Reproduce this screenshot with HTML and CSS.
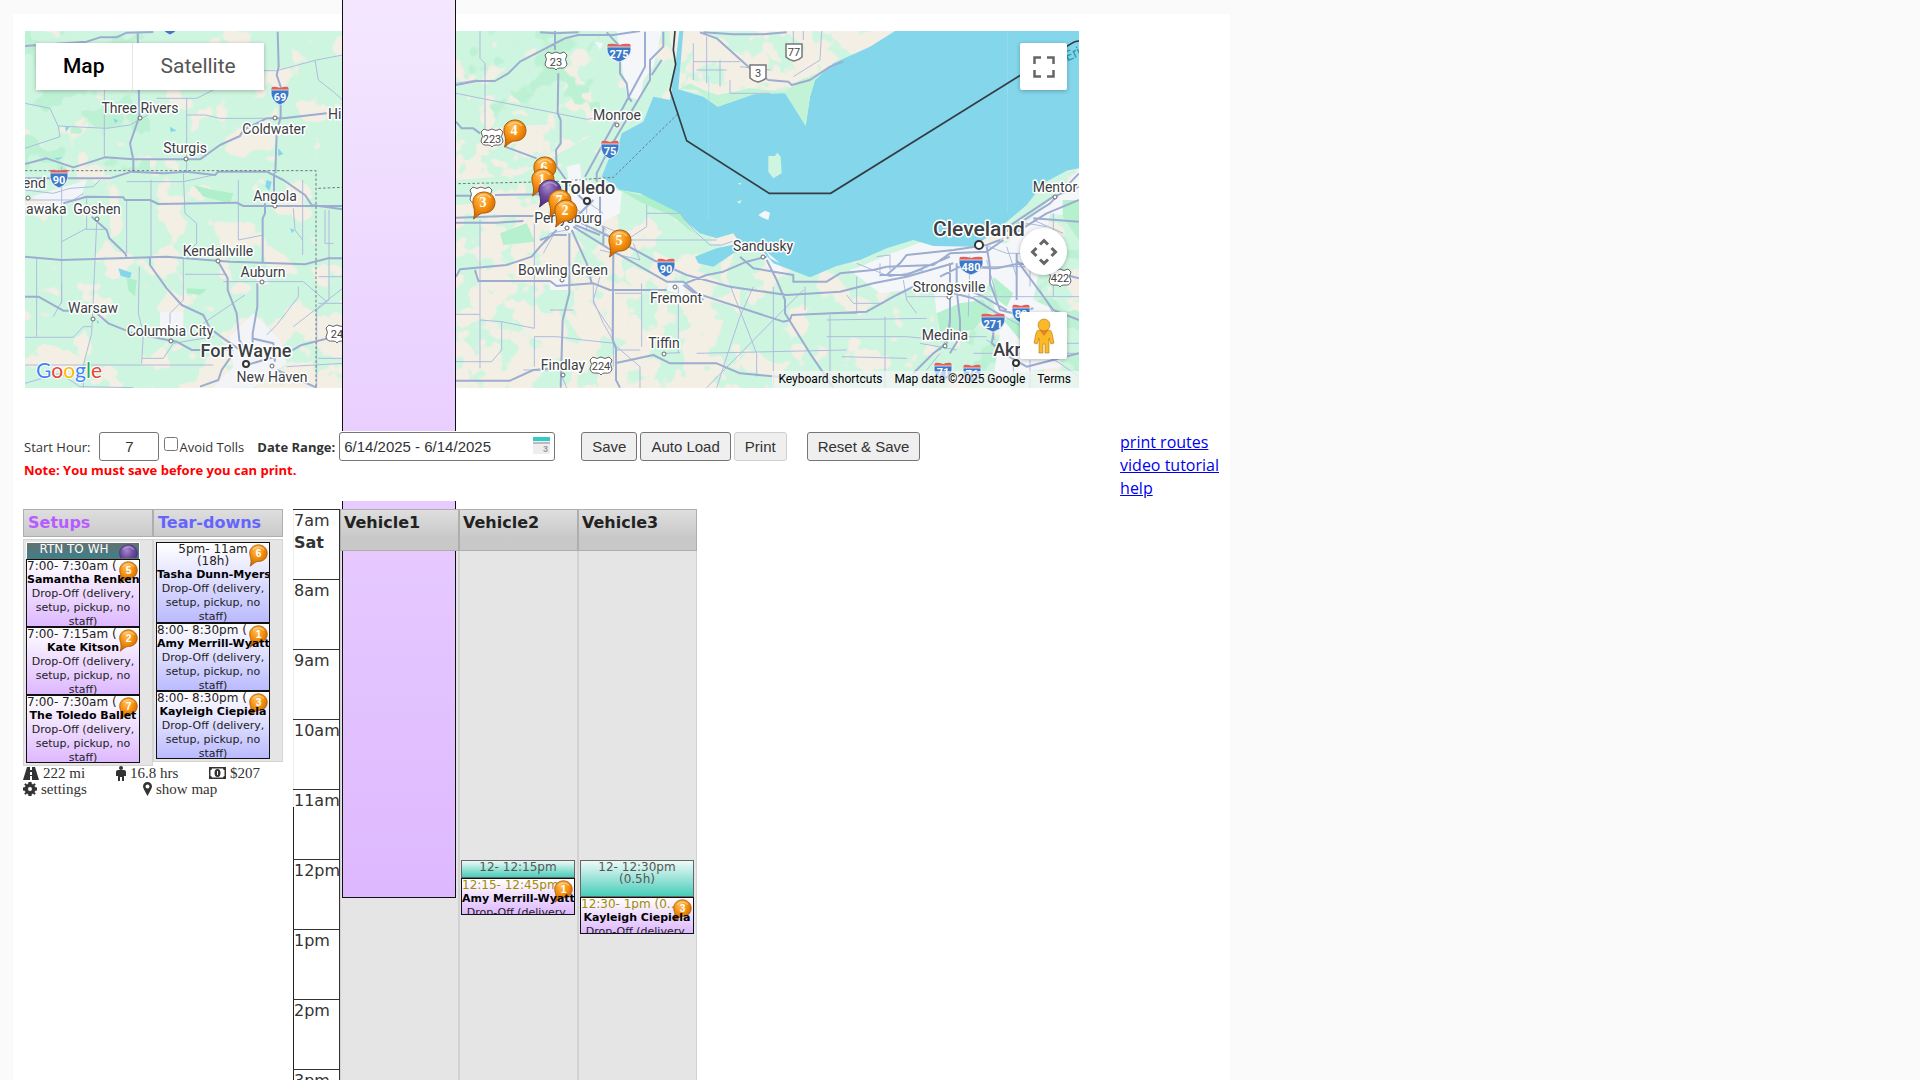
FILE: index.html
```html
<!DOCTYPE html>
<html lang="en">
<head>
<meta charset="utf-8">
<title>Route Planner</title>
<link rel="stylesheet" href="styles.css">
</head>
<body>
<svg class="defs" width="0" height="0" aria-hidden="true">
  <defs>
    <radialGradient id="orange" cx="40%" cy="25%" r="75%"><stop offset="0" stop-color="#ffc057"/><stop offset=".5" stop-color="#f5900f"/><stop offset="1" stop-color="#c96500"/></radialGradient>
    <radialGradient id="purple" cx="40%" cy="25%" r="75%"><stop offset="0" stop-color="#a58acb"/><stop offset=".5" stop-color="#6f4a9f"/><stop offset="1" stop-color="#4b2a78"/></radialGradient>
    <path id="balloon" d="M12 1C18 1 23 5.500 23 11.500C23 18 18 22 12 22C8 22 6 25 1.500 28C3 24 2.500 20 2 17C.5 13 .5 9 2 6.500C4 3 8 1 12 1Z"/>
    <symbol id="pin-orange" viewBox="0 0 24 29"><use href="#balloon" fill="url(#orange)" stroke="#a85c10" stroke-width="1"/><path d="M5 7Q12 0 19 7" fill="none" stroke="#ffd9a0" stroke-width="1.500" opacity=".7"/></symbol>
    <symbol id="pin-purple" viewBox="0 0 24 29"><use href="#balloon" fill="url(#purple)" stroke="#49306c" stroke-width="1"/><path d="M5 7Q12 0 19 7" fill="none" stroke="#c9b8e6" stroke-width="1.500" opacity=".6"/></symbol>
    <symbol id="interstate" viewBox="-12 -10 24 20" overflow="visible"><path d="M-8 -8Q-5 -9 0 -7Q5 -9 8 -8L9 -5H-9Z" fill="#e0605c"/><path d="M-9 -5H9Q10 6 0 10Q-10 6 -9 -5Z" fill="#3a78c8" stroke="#fff" stroke-width=".7"/></symbol>
    <symbol id="interstate-wide" viewBox="-14 -10 28 20" overflow="visible"><path d="M-11 -8Q-6 -9 0 -7Q6 -9 11 -8L12 -5H-12Z" fill="#e0605c"/><path d="M-12 -5H12Q13 6 0 10Q-13 6 -12 -5Z" fill="#3a78c8" stroke="#fff" stroke-width=".7"/></symbol>
    <symbol id="us-route" viewBox="-13 -10 26 20" overflow="visible"><path d="M-8 -9Q-4 -6 0 -9Q4 -6 8 -9L11 -6Q8 -2 11 3Q10 8 4 7Q1 7 0 9Q-1 7 -4 7Q-10 8 -11 3Q-8 -2 -11 -6Z" fill="#fff" stroke="#666" stroke-width="1"/></symbol>
    <symbol id="provincial" viewBox="-10 -10 20 20" overflow="visible"><path d="M-8 -8H8V5Q5 8 0 9Q-5 8 -8 5Z" fill="#fff" stroke="#777" stroke-width="1.500"/></symbol>
    <filter id="patches" x="0" y="0" width="100%" height="100%" color-interpolation-filters="sRGB"><feTurbulence type="fractalNoise" baseFrequency=".032" numOctaves="3" seed="8"/><feColorMatrix values="0 0 0 0 .957  0 0 0 0 .937  0 0 0 0 .898  22 0 0 0 -12.800"/></filter>
    <filter id="fields" x="0" y="0" width="100%" height="100%" color-interpolation-filters="sRGB"><feTurbulence type="fractalNoise" baseFrequency=".035" numOctaves="3" seed="14" result="n"/><feColorMatrix in="n" values="0 0 0 0 .957  0 0 0 0 .937  0 0 0 0 .898  22 0 0 0 -10" result="c"/><feComposite in="c" in2="SourceGraphic" operator="in"/></filter>
    <filter id="woods" x="0" y="0" width="100%" height="100%" color-interpolation-filters="sRGB"><feTurbulence type="fractalNoise" baseFrequency=".03" numOctaves="3" seed="31" result="n"/><feColorMatrix in="n" values="0 0 0 0 .74  0 0 0 0 .945  0 0 0 0 .83  0 22 0 0 -11.800" result="c"/><feComposite in="c" in2="SourceGraphic" operator="in"/></filter>
  </defs>
</svg>

<main class="sheet">
  <section class="map" aria-label="Delivery map">
    <svg class="map-canvas" viewBox="25 31 1054 357" preserveAspectRatio="xMinYMin slice">
      <rect x="25" y="31" width="1054" height="357" fill="#cef5e0"/>
      <rect x="25" y="31" width="1054" height="357" filter="url(#patches)"/>
      <path d="M456 388V205L560 195L640 245L740 290V388ZM300 300H345V388H150L240 340ZM620 120L520 175L456 180V130ZM645 31H900L830 110L680 90Z" filter="url(#fields)"/>
      <path d="M25 31H150V170H25ZM456 31H600V110L456 130ZM960 250H1079V388H930Z" filter="url(#woods)"/>
      <!-- western half: built-up areas, lakes, roads -->
      <g transform="scale(.33333)">
        <path d="M95 590L260 540L240 600L170 620ZM480 935H550V1010H480ZM690 1010L760 940L840 1020L860 1090L760 1163H640L700 1100ZM770 800L810 850L770 860Z" fill="#f3f4f8"/>
        <path d="M355 805L395 818L390 835L362 828ZM800 540L815 545L808 572L796 560ZM870 685L884 690L876 700ZM835 445L850 462L834 468ZM510 380L530 392L512 396ZM195 382L210 380L198 395ZM340 355L355 362L345 370ZM162 474L190 472L172 480ZM290 960L298 966L292 972Z" fill="#84d6eb"/>
        <path d="M580 555L640 570L700 580L690 610L610 590ZM560 865L620 868L600 885L560 880ZM380 835L410 840L405 890L385 870Z" fill="#b0efcb"/>
        <g class="road-minor">
          <path d="M75 310L150 325L175 380L180 410L75 445M175 378L320 385L390 375L470 330M313 270V470M470 295H590L640 270M560 295V515M560 345L615 345L660 355H800M780 212H830L950 180L1028 165M945 180L955 240L1000 275L1028 300M185 500V910M260 690V590M260 688H320M380 600V760M380 545H550L640 525M453 540V770M550 520L555 640L590 670V730L555 765M715 540V720L790 705M290 670L275 1000L250 1095V1163M110 775V1010M75 1012H220L250 980H275M160 950L185 905V850M185 725L260 685M418 800L415 940L430 1000L425 1090M75 1095H640M550 770V900L510 940V1020M555 823H680M670 845H910L980 905M735 885L610 970M895 860V890L830 975L800 1005M908 540V765M880 625L885 690L908 720M987 630V900L950 930V1163M955 830H1028M425 1075H490L520 1030L640 1010"/>
          <path d="M75 570L160 580L210 565L280 560L300 540M75 600H220L250 580M955 910H1028M1028 865L880 980M975 630V730H1000M1028 1075H955M860 1100L1028 1090M75 1150L180 1120L240 1160L400 1163"/>
        </g>
        <g class="road">
          <path d="M75 138L260 125L300 112H350L380 98L460 96M413 95L418 350L390 430L400 480V515M75 492L140 475L220 502L315 472L400 478L600 478L660 435L720 408L730 390L800 355H850L980 340M833 95L836 200L830 225L842 260V350L830 400L826 520M75 535H330L395 515L490 520L560 515L645 525L655 515H800L850 540L915 585L935 615L1028 628M190 610L260 590L370 592L375 600H450L475 612L710 608L730 618H1028M275 650L320 690L328 715L375 760L380 770M75 770L185 780L500 770L690 785L915 793L985 775H1028M450 775V795L500 865L545 915L610 945L630 985M655 785L683 835V870L710 940L718 1020L740 1060M822 520V610M795 610V640L788 655V790M772 850V920L758 1000V1040M75 890H115L190 932H210M290 940L325 970L400 1000L530 1025L575 1050L700 1050M630 985L670 1015L735 1060M755 1015L820 1030L825 1085M700 1060L665 1110L655 1140L600 1160M740 1095L860 1060L905 1035L985 1015M830 1110L950 1163"/>
        </g>
        <path class="state-line" d="M75 512H948V1163M955 565L1028 562"/>
      </g>
      <!-- eastern half: Lake Erie and its shore -->
      <g transform="translate(440) scale(.33333)">
        <path d="M530 93H665L640 200L610 240L600 300L560 290ZM380 500L420 490L425 540L545 575L540 640L440 690L330 700L330 660L400 640ZM950 700L1000 760L1040 830L980 800ZM690 840L740 850L730 885L680 870ZM330 835H385V870H330ZM490 130L480 150L465 125ZM1260 800L1330 770L1460 720L1700 730L1917 510V650L1830 640L1780 900L1870 940L1860 1100L1660 1130L1680 1010L1650 850L1500 1020L1480 860L1320 880L1230 810Z" fill="#f5f6f9"/>
        <path d="M1660 830L1720 880L1700 920L1660 890ZM1690 960L1760 940L1800 1010L1740 1020ZM1868 600H1917V720L1868 650ZM1490 940L1560 910L1630 900L1650 930L1600 990L1500 1000ZM180 700L260 670L285 725L190 735Z" fill="#b5f0cf"/>
        <path d="M718 93L705 200L690 300L640 290L610 365L545 400L535 440L505 480L485 530L540 570L600 580L720 650L780 700L830 715L880 700L900 730L830 745L765 770L775 790L820 800L880 760L960 745L1000 790L1110 832L1190 798L1260 780L1340 745L1420 720L1480 738L1600 740L1660 700L1760 615L1810 550L1880 512L1917 505V93H1365L1290 140L1180 190L1125 240L1110 290L1097 378L1070 320L1035 280L990 275L940 283L833 320L790 290L715 268L730 93Z" fill="#84d6eb"/>
        <path d="M715 268L770 270L833 320L940 283L1035 280L1097 378L1110 290L1125 240L1150 215L1080 240L1035 275L930 265L833 285L790 270L750 250Z" fill="#c3f3d7"/>
        <path d="M985 468H1005L1012 458L1022 470L1025 520L1000 535L985 515ZM893 550L905 548L900 555ZM890 605L905 600L900 612Z" fill="#cef5e0"/>
        <path d="M955 645L975 632L990 638L985 660L965 652ZM960 720L985 760L1020 790L990 775Z" fill="#f5f6f9"/>
        <path d="M540 570L620 590L720 640L760 700L700 650L600 605Z" fill="#aef0c9"/>
        <g class="road-minor">
          <path d="M120 93V175L135 190V385M48 280L250 320L440 358L500 350M48 250L110 240M120 660V1105M48 943H120M120 960L185 965V1050L155 1085H48M185 965L283 985V665M283 1010H350L430 1020L525 1030M283 1010V1100M520 760V1100M460 850V910L520 1000M480 830L460 900L490 970L530 1040L600 1100V1163M605 850V1040M525 880H605M715 860V1060M525 720H830M620 615V680L560 720M620 640H720L760 690L810 735H845L890 720M770 1060L1220 1050M670 1060L720 1058M600 1050H525M480 750L600 780L580 730M400 930H330M940 860L900 950L870 1040L830 1163M1090 870L1000 960L800 1163M1000 860V1163M1095 860V930M870 855L950 1060V1130M1170 945V1163M1250 830V940H1160M1160 960L1460 955M1220 885L1240 910H1330M1335 950V1163M1160 1010H1400L1450 1015M1205 1070L1400 1075"/>
          <path d="M760 130V240M800 110V250M840 180V260M760 185H900M870 240V280H990M770 210H860M900 200L990 210M1060 93V150M1145 93L1140 180L1060 230M1090 93V120M1320 790V830M1310 770L1350 765V810M1390 840L1400 900L1430 940M1400 890H1540M1440 1030L1550 1050M1530 870V1000L1500 1050M1590 770L1585 950M1640 780L1670 890M1700 740L1730 830M1770 720V860M1700 890H1917M1550 800H1760M1600 890H1700M1560 1010H1640M1660 930L1780 1000M1800 870L1840 940M1840 640V890M1780 660L1870 700M1640 1020L1730 1070M1600 1060H1917M1720 1100V1163M1770 1080V1163M1830 1070L1917 1130M1500 1060L1460 1110M1810 1030H1917M1680 720L1760 670L1820 680M1620 730L1700 760H1780"/>
          <path d="M370 600L500 690M400 640L540 700M420 590L490 640M440 610V690M330 640L400 660M300 740L330 700L380 690M310 760L340 705M350 1090L380 1163M250 1110H350M1250 790L1350 830L1450 810"/>
        </g>
        <g class="road">
          <path d="M345 93V150M355 220L353 340L362 360V430L348 450L350 500L400 570L440 610M48 255L110 243H165L205 220L240 185L375 115L415 105H520L600 93M300 97L345 100L415 97M500 97L540 140V220L560 250L565 290L575 305M615 95V200L545 330L435 530M670 95V140L630 180V240L500 460L470 520V545M665 180L635 225M48 365L65 385H100L120 400M195 440L290 475M48 587H105M165 585L340 583M48 653L200 648H280M48 668H170L250 663M340 660L420 640L460 600M350 690L300 740L275 770L200 795L60 808L48 830M105 810L115 843H330L350 858L460 850L510 870H680M388 700V880L368 960L362 1163M395 690L440 790L455 850M400 680L505 745L680 845H730L770 880L1030 965L1050 960L1055 945L1280 935L1370 885L1440 850M405 675L480 705M415 665L530 720L640 780L740 825L870 860L1040 885L1200 875L1300 850L1400 830L1540 790M520 760L518 1020L528 1045V1140L540 1163M48 1142H210L280 1110L350 1105M525 1090L640 1065L690 1090H830L900 1120L1010 1130M735 850L800 825L850 815L920 785L980 770M980 780L1010 840L1035 900V940L1110 1060L1180 1163M900 770L940 805L1060 825V845L1160 845L1200 820L1300 810L1340 800M490 680V735M480 590V680M380 705H340L300 720M730 855L790 900"/>
          <path d="M780 97L830 115L930 205L985 240L1045 245L1055 255L1110 240L1170 200L1210 185M790 97L880 103H970L1040 97M1340 825L1380 790L1400 765L1540 750L1640 735L1680 720M1340 800L1480 795L1530 760L1640 755L1690 720M1320 825H1400L1530 770M1640 740L1650 800V850L1680 930L1720 940L1780 925M1530 790V960L1520 1030L1480 1060L1420 1120M1550 790V870L1560 960V1010L1530 1060M1540 880L1600 895L1680 945M1560 860L1630 890L1700 930M1500 830L1560 800L1670 805L1740 790L1917 835M1730 760V900M1730 780L1840 930L1917 960M1690 700L1830 610L1917 520M1700 715L1820 640L1917 600M1690 690L1840 590L1917 560M1780 655L1917 665M1660 1000L1655 1030L1690 1060L1760 1100L1917 1060M1010 1130H1040M1660 980V1020"/>
        </g>
        <path d="M806 230V660M1702 93V640" stroke="#9fdff0" stroke-width="2" fill="none"/>
        <path class="state-line" d="M55 551L340 545L520 532L715 340"/>
        <path d="M705 93L700 150L707 193L690 270L740 422L988 580H1172L1890 133Q1905 123 1917 123" fill="none" stroke="#333d43" stroke-width="5"/>
      </g>
      <g class="dots">
        <circle cx="140" cy="118" r="2"/><circle cx="275" cy="118" r="2"/><circle cx="186" cy="159" r="2"/><circle cx="28" cy="198" r="2"/><circle cx="97" cy="219" r="2"/><circle cx="275" cy="206" r="2"/><circle cx="218" cy="261" r="2"/><circle cx="262" cy="282" r="2"/><circle cx="93" cy="319" r="2"/><circle cx="171" cy="341" r="2"/><circle cx="272" cy="366" r="2"/><circle cx="617" cy="125" r="2"/><circle cx="567" cy="228" r="2"/><circle cx="562" cy="280" r="2"/><circle cx="675" cy="287" r="2"/><circle cx="763" cy="257" r="2"/><circle cx="664" cy="354" r="2"/><circle cx="563" cy="375" r="2"/><circle cx="1055" cy="197" r="2"/><circle cx="949" cy="297" r="2"/><circle cx="945" cy="346" r="2"/>
      </g>
      <g class="dots major"><circle cx="246" cy="364" r="3"/><circle cx="587" cy="201" r="3"/><circle cx="979" cy="245" r="4"/><circle cx="1016" cy="363" r="3"/></g>
      <g class="town">
        <text x="140" y="113">Three Rivers</text><text x="274" y="134">Coldwater</text><text x="185" y="153">Sturgis</text><text x="355" y="119">Hillsdale</text><text x="10" y="188">South Bend</text><text x="31" y="214">Mishawaka</text><text x="97" y="214">Goshen</text><text x="275" y="201">Angola</text><text x="218" y="256">Kendallville</text><text x="263" y="277">Auburn</text><text x="93" y="313">Warsaw</text><text x="170" y="336">Columbia City</text><text x="272" y="382">New Haven</text><text x="617" y="120">Monroe</text><text x="568" y="223">Perrysburg</text><text x="563" y="275">Bowling Green</text><text x="676" y="303">Fremont</text><text x="763" y="251">Sandusky</text><text x="664" y="348">Tiffin</text><text x="563" y="370">Findlay</text><text x="1055" y="192">Mentor</text><text x="949" y="292">Strongsville</text><text x="945" y="340">Medina</text>
      </g>
      <g class="city"><text x="246" y="357">Fort Wayne</text><text x="588" y="194">Toledo</text><text class="metro" x="979" y="236">Cleveland</text><text x="1017" y="356">Akron</text></g>
      <text class="water" x="1037" y="75" transform="rotate(-24 1037 75)">Lake Erie</text>
      <g class="shield-text light">
        <use href="#interstate" x="268" y="85" width="24" height="20"/><text x="280" y="101">69</text>
        <use href="#interstate" x="47" y="168" width="24" height="20"/><text x="59" y="184">90</text>
        <use href="#interstate-wide" x="605" y="42" width="28" height="20"/><text x="619" y="58">275</text>
        <use href="#interstate" x="598" y="139" width="24" height="20"/><text x="610" y="155">75</text>
        <use href="#interstate" x="654" y="257" width="24" height="20"/><text x="666" y="273">90</text>
        <use href="#interstate-wide" x="957" y="255" width="28" height="20"/><text x="971" y="271">480</text>
        <use href="#interstate-wide" x="979" y="312" width="28" height="20"/><text x="993" y="328">271</text>
        <use href="#interstate" x="1009" y="303" width="24" height="20"/><text x="1021" y="318">80</text>
        <use href="#interstate" x="931" y="361" width="24" height="20"/><text x="943" y="376">71</text>
        <use href="#interstate" x="960" y="363" width="24" height="20"/><text x="972" y="378">76</text>
        <use href="#interstate" x="158" y="15" width="24" height="20"/>
      </g>
      <g class="shield-text">
        <use href="#us-route" x="324" y="324" width="26" height="20"/><text x="337" y="338">24</text>
        <use href="#us-route" x="543" y="51" width="26" height="20"/><text x="556" y="66">23</text>
        <use href="#us-route" x="479" y="128" width="26" height="20"/><text x="492" y="143">223</text>
        <use href="#us-route" x="468" y="186" width="26" height="20"/>
        <use href="#us-route" x="588" y="356" width="26" height="20"/><text x="601" y="370">224</text>
        <use href="#us-route" x="1047" y="268" width="26" height="20"/><text x="1060" y="282">422</text>
        <use href="#provincial" x="784" y="42" width="20" height="20"/><text x="794" y="56">77</text>
        <use href="#provincial" x="748" y="63" width="20" height="20"/><text x="758" y="77">3</text>
      </g>
      <g class="stops">
        <use href="#pin-orange" x="503" y="119" width="24" height="29"/><text x="514" y="135">4</text>
        <use href="#pin-orange" x="533" y="156" width="24" height="29"/><text x="544" y="172">6</text>
        <use href="#pin-orange" x="531" y="168" width="24" height="29"/><text x="542" y="184">1</text>
        <use href="#pin-purple" x="538" y="179" width="24" height="29"/>
        <use href="#pin-orange" x="548" y="189" width="24" height="29"/><text x="559" y="205">7</text>
        <use href="#pin-orange" x="554" y="199" width="24" height="29"/><text x="565" y="215">2</text>
        <use href="#pin-orange" x="472" y="191" width="24" height="29"/><text x="483" y="207">3</text>
        <use href="#pin-orange" x="608" y="229" width="24" height="29"/><text x="619" y="245">5</text>
      </g>
      <text class="google" x="36" y="378"><tspan fill="#4285f4">G</tspan><tspan fill="#ea4335">o</tspan><tspan fill="#fbbc04">o</tspan><tspan fill="#4285f4">g</tspan><tspan fill="#34a853">l</tspan><tspan fill="#ea4335">e</tspan></text>
    </svg>
    <div class="map-type">
      <button type="button" class="map-type-active">Map</button><button type="button">Satellite</button>
    </div>
    <button type="button" class="map-button fullscreen" aria-label="Toggle fullscreen view"><svg width="22" height="22"><path d="M1.500 8V1.500H8M14 1.500H20.500V8M20.500 14V20.500H14M8 20.500H1.500V14" fill="none" stroke="#666" stroke-width="2.500"/></svg></button>
    <button type="button" class="map-button camera" aria-label="Map camera controls"><svg width="28" height="28"><path d="M10 6.500L14 2.500L18 6.500M10 21.500L14 25.500L18 21.500M6.500 10L2.500 14L6.500 18M21.500 10L25.500 14L21.500 18" fill="none" stroke="#666" stroke-width="3"/></svg></button>
    <button type="button" class="map-button pegman" aria-label="Street View"><svg width="22" height="36" viewBox="0 0 22 36"><path d="M6 12H16Q18 12 19 15L21 25L18 26L16 20V35H12V26H10V35H6V20L4 26L1 25L3 15Q4 12 6 12Z" fill="#fbb928" stroke="#b07a10" stroke-width=".6"/><path d="M6.500 12H15.500L11 18Z" fill="#e5812b"/><circle cx="11" cy="7" r="6" fill="#fbb928" stroke="#a5761d" stroke-width=".6"/></svg></button>
    <div class="map-credit"><button type="button">Keyboard shortcuts</button><span>Map data ©2025 Google</span><a href="#terms">Terms</a></div>
  </section>

  <div class="toolbar">
    <form class="options">
      <div class="controls">
        <label for="start-hour">Start Hour:</label>
        <input id="start-hour" class="hour" type="text" value="7">
        <input id="tolls" class="tick" type="checkbox"><label for="tolls" class="tolls">Avoid Tolls</label>
        <label for="range" class="strong">Date Range:</label>
        <span class="date-field"><input id="range" type="text" value="6/14/2025 - 6/14/2025"><svg class="calendar" width="17" height="17"><rect width="17" height="17" fill="#eee"/><rect width="17" height="4" fill="#35cbcb"/><rect y="5" width="17" height="2" fill="#bbb"/><text x="10" y="15" font-size="9">3</text></svg></span>
        <span class="actions"><button type="button">Save</button><button type="button">Auto Load</button><button type="button" class="muted">Print</button></span>
        <button type="button">Reset &amp; Save</button>
      </div>
      <p class="note">Note: You must save before you can print.</p>
    </form>
    <nav class="links"><a href="#routes">print routes</a><a href="#tutorial">video tutorial</a><a href="#help">help</a></nav>
  </div>

  <div class="planner">
    <section class="pool">
      <div class="pool-columns">
        <div class="pool-column">
          <h2 class="setups">Setups</h2>
          <div class="pool-list">
            <article class="card warehouse"><p class="time">RTN TO WH</p><svg class="badge" viewBox="0 0 24 29"><use href="#pin-purple"/></svg></article>
            <article class="card setup"><p class="time one">7:00- 7:30am (0.5h)</p><svg class="badge" viewBox="0 0 24 29"><use href="#pin-orange"/><text x="12" y="16">5</text></svg><h3>Samantha Renken</h3><p>Drop-Off (delivery, setup, pickup, no staff)</p></article>
            <article class="card setup"><p class="time one">7:00- 7:15am (0.25h)</p><svg class="badge" viewBox="0 0 24 29"><use href="#pin-orange"/><text x="12" y="16">2</text></svg><h3>Kate Kitson</h3><p>Drop-Off (delivery, setup, pickup, no staff)</p></article>
            <article class="card setup"><p class="time one">7:00- 7:30am (0.5h)</p><svg class="badge" viewBox="0 0 24 29"><use href="#pin-orange"/><text x="12" y="16">7</text></svg><h3>The Toledo Ballet</h3><p>Drop-Off (delivery, setup, pickup, no staff)</p></article>
          </div>
        </div>
        <div class="pool-column">
          <h2 class="teardowns">Tear-downs</h2>
          <div class="pool-list">
            <article class="card teardown tall"><p class="time">5pm- 11am<br>(18h)</p><svg class="badge" viewBox="0 0 24 29"><use href="#pin-orange"/><text x="12" y="16">6</text></svg><h3>Tasha Dunn-Myers</h3><p>Drop-Off (delivery, setup, pickup, no staff)</p></article>
            <article class="card teardown"><p class="time one">8:00- 8:30pm (0.5h)</p><svg class="badge" viewBox="0 0 24 29"><use href="#pin-orange"/><text x="12" y="16">1</text></svg><h3>Amy Merrill-Wyatt</h3><p>Drop-Off (delivery, setup, pickup, no staff)</p></article>
            <article class="card teardown"><p class="time one">8:00- 8:30pm (0.5h)</p><svg class="badge" viewBox="0 0 24 29"><use href="#pin-orange"/><text x="12" y="16">3</text></svg><h3>Kayleigh Ciepiela</h3><p>Drop-Off (delivery, setup, pickup, no staff)</p></article>
          </div>
        </div>
      </div>
      <div class="stats">
        <span><svg width="16" height="13"><path d="M4 0H7V3H9V0H12L16 13H9V9H7V13H0ZM7 5V8H9V5Z" fill-rule="evenodd"/></svg>222 mi</span>
        <span><svg width="10" height="15"><circle cx="5" cy="2" r="2"/><path d="M2 4H8Q10 4 10 6V10H8V15H6V11H4V15H2V10H0V6Q0 4 2 4Z"/></svg>16.8 hrs</span>
        <span><svg width="17" height="12"><path d="M0 0H17V12H0ZM3 1.500Q3 3 1.500 3V9Q3 9 3 10.500H14Q14 9 15.500 9V3Q14 3 14 1.500Z" fill-rule="evenodd"/><ellipse cx="8.500" cy="6" rx="3" ry="4"/><path d="M8.500 4V8" stroke="#fff"/></svg>$207</span>
      </div>
      <div class="stats tools">
        <span><svg width="14" height="14"><path d="M5.700 0H8.300L8.700 2L10 2.600L11.700 1.500L12.500 2.300L11.400 4L12 5.300L14 5.700V8.300L12 8.700L11.400 10L12.500 11.700L11.700 12.500L10 11.400L8.700 12L8.300 14H5.700L5.300 12L4 11.400L2.300 12.500L1.500 11.700L2.600 10L2 8.700L0 8.300V5.700L2 5.300L2.600 4L1.500 2.300L2.300 1.500L4 2.600L5.300 2ZM7 4.800A2.200 2.200 0 1 0 7 9.200A2.200 2.200 0 1 0 7 4.800Z" fill-rule="evenodd" stroke="#333" stroke-width=".4"/></svg>settings</span>
        <span><svg width="9" height="14"><path d="M4.500 0A4.500 4.500 0 0 1 9 4.500Q9 6 4.500 14Q0 6 0 4.500A4.500 4.500 0 0 1 4.500 0ZM4.500 2.500A2 2 0 1 0 4.500 6.500A2 2 0 1 0 4.500 2.500Z" fill-rule="evenodd"/></svg>show map</span>
      </div>
    </section>

    <section class="schedule">
      <div class="hours">
        <div>7am<b>Sat</b></div><div>8am</div><div>9am</div><div>10am</div><div>11am</div><div>12pm</div><div>1pm</div><div>2pm</div><div>3pm</div>
      </div>
      <div class="vehicle">
        <h2>Vehicle1</h2>
        <div class="lane"><div class="long-run"></div></div>
      </div>
      <div class="vehicle">
        <h2>Vehicle2</h2>
        <div class="lane">
          <article class="card drive quarter"><p class="time">12- 12:15pm</p></article>
          <article class="card setup half"><p class="time one gold">12:15- 12:45pm</p><svg class="badge" viewBox="0 0 24 29"><use href="#pin-orange"/><text x="12" y="16">1</text></svg><h3>Amy Merrill-Wyatt</h3><p>Drop-Off (delivery, setup, pickup, no staff)</p></article>
        </div>
      </div>
      <div class="vehicle">
        <h2>Vehicle3</h2>
        <div class="lane">
          <article class="card drive half"><p class="time">12- 12:30pm<br>(0.5h)</p></article>
          <article class="card setup half"><p class="time one gold dots-end">12:30- 1pm (0.5h)</p><svg class="badge" viewBox="0 0 24 29"><use href="#pin-orange"/><text x="12" y="16">3</text></svg><h3>Kayleigh Ciepiela</h3><p>Drop-Off (delivery, setup, pickup, no staff)</p></article>
        </div>
      </div>
    </section>
  </div>
</main>
</body>
</html>
```
FILE: styles.css
```css
* { box-sizing: border-box; }
body { margin: 0; height: 100vh; overflow: hidden; background: #fafafa; color: #333; font-family: "Trebuchet MS", "Open Sans", sans-serif; font-size: 13px; }
h2, h3, p { margin: 0; }
button { font-family: inherit; color: inherit; }
.defs { position: absolute; }
.sheet { max-width: 1217px; min-height: 100vh; margin: 14px 0 0 13px; padding: 17px 10px 0; background: #fff; }

/* map */
.map { position: relative; max-width: 1054px; height: 357px; margin-left: 2px; overflow: hidden; font-family: Roboto, sans-serif; }
.map-canvas { display: block; width: 100%; height: 100%; }
.road { fill: none; stroke: #9cadd0; stroke-width: 6; stroke-linejoin: round; }
.road-minor { fill: none; stroke: #aebddd; stroke-width: 3; stroke-linejoin: round; }
.state-line { fill: none; stroke: #6c7c7c; stroke-width: 3; stroke-dasharray: 8 6; }
.dots { fill: #fff; stroke: #666; stroke-width: 1; }
.major { stroke: #333; stroke-width: 2; }
.town, .city { fill: #3c4043; text-anchor: middle; font-size: 14px; stroke: #fff; stroke-width: 3px; stroke-linejoin: round; paint-order: stroke; }
.city { font-size: 18px; font-weight: 500; }
.metro { font-size: 21px; }
.water { fill: #2596ab; font-size: 14px; }
.shield-text { fill: #444; font-size: 11px; text-anchor: middle; }
.light { fill: #fff; font-weight: 700; }
.stops { fill: #fff; font-family: "Liberation Serif", serif; font-size: 14px; font-weight: 700; text-anchor: middle; }
.google { font-family: Lato, sans-serif; font-size: 21px; stroke: #fff; stroke-width: 2px; paint-order: stroke; }
.map-type { position: absolute; left: 11px; top: 12px; display: flex; background: #fff; box-shadow: 0 1px 4px #0004; border-radius: 2px; }
.map-type button { height: 47px; padding: 0 28px; border: 0; background: #fff; color: #565656; font-size: 21px; line-height: 45px; }
.map-type .map-type-active { padding: 0 27px; border-right: 1px solid #e6e6e6; color: #000; font-weight: 500; }
.map-button { position: absolute; right: 12px; display: grid; place-items: center; width: 47px; height: 47px; padding: 0; border: 0; border-radius: 2px; background: #fff; box-shadow: 0 1px 4px #0004; }
.fullscreen { top: 12px; }
.camera { top: 197px; border-radius: 50%; }
.pegman { top: 281px; }
.map-credit { position: absolute; right: 0; bottom: 0; display: flex; gap: 12px; padding: 0 8px 0 6px; background: #f5f5f5b8; color: #000; font-size: 12px; line-height: 17px; }
.map-credit button { padding: 0; border: 0; background: none; font-size: 12px; line-height: 17px; }
.map-credit a { color: #000; text-decoration: none; }

/* toolbar */
.toolbar { position: relative; z-index: 2; display: flex; justify-content: space-between; height: 70px; margin-top: 43px; padding: 0 1px; background: #fff; }
.controls { display: flex; align-items: center; padding-top: 1px; }
.controls button, .controls input[type="text"] { height: 29px; border: 1px solid #767676; border-radius: 3px; color: #333; font-family: "Liberation Sans", sans-serif; font-size: 15px; }
.controls button { padding: 0 10px; background: #efefef; }
.controls .muted { border-color: #d0d0d0; }
.controls .hour { width: 60px; margin: 0 5px 0 9px; text-align: center; }
.tick { width: 14px; height: 14px; margin: 0 1px 6px 0; }
.strong { margin: 0 4px 0 13px; font-weight: 700; }
.date-field { position: relative; }
.date-field input { width: 216px; padding: 0 4px; }
.calendar { position: absolute; right: 5px; top: 5px; fill: #999; font-family: "Liberation Sans", sans-serif; font-weight: 700; }
.actions { display: flex; gap: 3px; margin: 0 20px 0 26px; }
.note { color: #f00; font-weight: 700; line-height: 18px; }
.links { display: flex; flex-direction: column; font-size: 16px; line-height: 23px; }
.links a { color: #00e; }

/* planner */
.planner { display: flex; gap: 10px; margin-top: 8px; font-family: Verdana, "DejaVu Sans", sans-serif; }
.pool { width: 260px; }
.pool-columns { display: flex; align-items: flex-start; height: 256px; }
.pool-column { width: 130px; }
.pool h2 { height: 28px; padding-left: 4px; border: 1px solid #aeaeae; background: linear-gradient(#dedede, #cacaca); font-size: 16px; line-height: 25px; }
.pool .setups { color: #b85cff; }
.pool .teardowns { color: #6464ff; }
.pool-list { margin-top: 2px; padding: 2px 12px 2px 2px; border: 1px solid #d4d4d4; background: #e5e5e5; }
.card { position: relative; height: 68px; overflow: hidden; border: 1px solid #111; color: #222; font-size: 11px; line-height: 14px; text-align: center; }
.card h3 { position: relative; color: #000; font-size: 11px; line-height: 14px; white-space: nowrap; }
.card .time { margin-bottom: 1px; font-size: 12px; line-height: 12px; }
.card .one { width: 90px; overflow: hidden; text-align: left; white-space: nowrap; }
.card .gold { width: 97px; color: #a08c00; }
.card .dots-end { width: 104px; text-overflow: ellipsis; }
.card.tall { height: 81px; }
.setup { background: linear-gradient(#fff, #deb8ff); }
.teardown { background: linear-gradient(#fff, #babaff); }
.card.warehouse { height: 17px; border-color: #fff #fff transparent; background: linear-gradient(#64706f, #3f7f8b); }
.warehouse .time { padding-right: 18px; color: #fff; }
.drive { border-color: #666; background: linear-gradient(#eefaf8, #48cdb9); }
.drive .time { color: #555; }
.card.quarter { height: 18px; }
.card.half { height: 37px; }
.badge { position: absolute; right: 1px; top: 1px; width: 19px; height: 23px; fill: #fff; font-family: "Liberation Sans", sans-serif; font-size: 13px; font-weight: 700; text-anchor: middle; }
.stats { display: grid; grid-template-columns: 93px 93px auto; font-family: "Liberation Serif", serif; font-size: 15px; line-height: 16px; color: #333; }
.stats span { display: flex; align-items: center; gap: 4px; white-space: nowrap; }
.stats svg { fill: #333; }
.tools { grid-template-columns: 120px auto; }

/* schedule */
.schedule { display: flex; font-size: 16px; }
.hours { width: 47px; border-right: 1px solid #333; background: linear-gradient(#eee 298px, #222 298px) left / 1px 100% no-repeat; }
.hours div { height: 70px; padding-left: 1px; border-top: 1px solid #333; line-height: 22px; }
.hours b { display: block; }
.vehicle { width: 119px; }
.vehicle h2 { position: relative; z-index: 2; height: 42px; padding: 0 3px; border: 1px solid #aeaeae; background: linear-gradient(#dedede, #c8c8c8 70%); color: #222; font-size: 16px; line-height: 25px; }
.lane { position: relative; height: 588px; padding: 309px 2px 0 1px; border: solid #d2d2d2; border-width: 0 1px; background: #e5e5e5; }
.long-run { position: absolute; z-index: 1; left: 1px; top: -551px; width: 114px; height: 898px; border: 1px solid #111; border-top: 0; background: linear-gradient(#f4e7ff, #e7cbff 500px, #deb8ff); }
```
